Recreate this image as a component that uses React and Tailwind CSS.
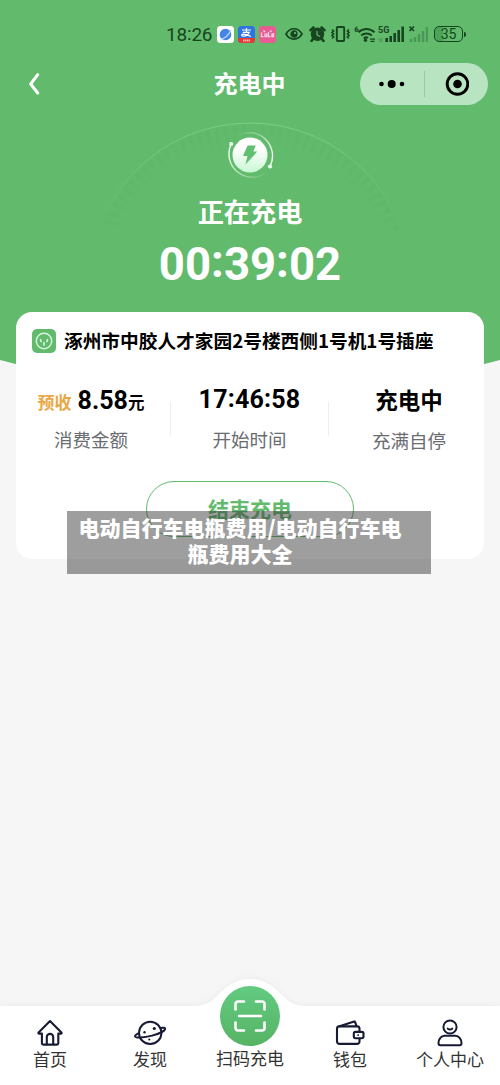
import clsx from 'clsx';

const tabs = [
  { id: 'home', label: '首页', icon: HomeIcon },
  { id: 'discover', label: '发现', icon: PlanetIcon },
  { id: 'scan', label: '扫码充电', icon: ScanIcon, primary: true },
  { id: 'wallet', label: '钱包', icon: WalletIcon },
  { id: 'profile', label: '个人中心', icon: UserIcon },
];

function HomeIcon() {
  return (
    <svg className="h-[28px] w-[28px]" viewBox="0 0 28 28" fill="none" stroke="#171a33" strokeWidth="2.1" strokeLinejoin="round" strokeLinecap="round">
      <path d="M14 2 2.6 13.4c-.5.6-.2 1.200.5 1.200h2.800v9.600c0 .9.6 1.400 1.400 1.400h13.600c.8 0 1.400-.5 1.400-1.400v-9.600h2.600c.7 0 1-.6.5-1.200L14 2Z" />
      <path d="M10.800 25.300v-7.200a3.200 3.200 0 0 1 6.400 0v7.200" />
    </svg>
  );
}

function PlanetIcon() {
  return (
    <svg className="h-[28px] w-[32px]" viewBox="0 0 32 28" fill="none" stroke="#171a33" strokeWidth="2" strokeLinecap="round" strokeLinejoin="round">
      <circle cx="16.200" cy="13.900" r="11.200" />
      <path d="M26.500 9c3-.7 4.600-.3 4.600.7 0 1.900-5.300 5-13 6.900C9.600 18.700 1.500 19.200 1.100 17.500c-.2-1.100 1.200-2.200 3.700-3.400" />
      <circle cx="20.300" cy="9.500" r="1.600" fill="#171a33" stroke="none" />
      <circle cx="10.500" cy="13.200" r="1.200" fill="#171a33" stroke="none" />
      <circle cx="15.300" cy="20.500" r="1.100" fill="#171a33" stroke="none" />
    </svg>
  );
}

function WalletIcon() {
  return (
    <svg className="h-[28px] w-[30px]" viewBox="0 0 30 28" fill="none" stroke="#171a33" strokeWidth="2.1" strokeLinejoin="round" strokeLinecap="round">
      <path d="M24.500 12.700V9.800a2.400 2.400 0 0 0-2.400-2.400H4.400A2.400 2.400 0 0 0 2 9.800v12.700a2.400 2.400 0 0 0 2.400 2.400h17.700a2.400 2.400 0 0 0 2.400-2.400v-3" />
      <path d="m4.500 7.200 14.700-4.600c.5-.1.900.1 1 .5l1.300 4" />
      <rect x="18.800" y="12.900" width="9.700" height="6.400" rx="1.700" />
      <path d="M23 16.100h.2" strokeWidth="1.700" />
    </svg>
  );
}

function UserIcon() {
  return (
    <svg className="h-[28px] w-[26px]" viewBox="0 0 26 28" fill="none" stroke="#171a33" strokeWidth="2" strokeLinecap="round" strokeLinejoin="round">
      <circle cx="13" cy="8" r="6.600" />
      <path d="M10.800 9.600c1.200 1.300 3.200 1.300 4.400 0" />
      <path d="M7.500 16.800h11c3.300 0 5.800 3.400 6 7.200 0 1.400-.6 2.200-1.800 2.200H3.300c-1.200 0-1.800-.8-1.800-2.200.2-3.800 2.700-7.200 6-7.200Z" />
    </svg>
  );
}

function ScanIcon() {
  return (
    <svg className="h-[32px] w-[32px]" viewBox="0 0 32 32" fill="none" stroke="#fff" strokeWidth="2.600" strokeLinecap="round" strokeLinejoin="round">
      <path d="M1.500 9.500V4a2.500 2.500 0 0 1 2.500-2.500h6M22 1.500h6A2.500 2.500 0 0 1 30.500 4v5.500M30.500 22.500V28a2.500 2.500 0 0 1-2.500 2.500h-6M10 30.500H4A2.500 2.500 0 0 1 1.500 28v-5.500M5 16h22" />
    </svg>
  );
}

// Digits with the colons lifted to the middle of the numerals
function Clock({ value, colonClass }) {
  return value.split(/(:)/).map((part, index) =>
    part === ':' ? (
      <span key={index} className={clsx('relative', colonClass)}>
        :
      </span>
    ) : (
      part
    )
  );
}

function StatusBar() {
  return (
    <div className="flex h-[55px] items-center pt-[13px] pl-[166px] text-[#17451f]">
      <span className="w-[51px] font-['Roboto'] text-[19px] leading-none tracking-[-0.2px]">
        <Clock value="18:26" colonClass="-top-px" />
      </span>
      <svg className="h-[17px] w-[17px]" viewBox="0 0 17 17">
        <rect width="17" height="17" rx="3.500" fill="#fff" />
        <circle cx="8.500" cy="8.500" r="5.800" fill="#4384e4" />
        <path d="M3.500 13.200C7 13 12 9 14 4" stroke="#b8d7fb" strokeWidth="1.300" fill="none" />
      </svg>
      <svg className="ml-[4px] h-[17px] w-[17px]" viewBox="0 0 17 17">
        <rect width="17" height="17" rx="3.500" fill="#2f72e4" />
        <path d="M0 12h17v1.500a3.500 3.500 0 0 1-3.500 3.500h-10A3.500 3.500 0 0 1 0 13.500Z" fill="#e23b36" />
        <path d="M4 4h9M8.500 2v4M4.800 6.300h6.500c-.8 2-3 4-6.200 3.900-2-.2-1.700-2 .2-2 2.200 0 5 1.200 7.700 2.300" stroke="#fff" strokeWidth="1.200" fill="none" />
        <path d="M5 14.500h7" stroke="#f7b5b0" strokeWidth="2" strokeDasharray="1.500 .5" />
      </svg>
      <svg className="ml-[4px] h-[17px] w-[17px]" viewBox="0 0 17 17">
        <rect width="17" height="17" rx="3.500" fill="#e85c94" />
        <path d="M2.500 6.500v4.200h2M6 7.500v3.200h1.800V7.200M9.500 6v4.700h2M13 7.500v3.200h1.500V7M4.500 4.500 6 6M12.500 4.500 11 6" stroke="#fbd7e5" strokeWidth="1.300" fill="none" />
      </svg>
      {/* eye comfort */}
      <svg className="ml-[9px] h-[14px] w-[18px]" viewBox="0 0 18 14" fill="none" stroke="currentColor" strokeWidth="1.700">
        <path d="M1 7c3.800-7 12.200-7 16 0-3.800 6.700-12.200 6.700-16 0Z" />
        <circle cx="9" cy="7" r="2.800" fill="currentColor" />
        <circle cx="10" cy="6" r=".9" fill="#8bc994" stroke="none" />
      </svg>
      {/* alarm */}
      <svg className="ml-[6px] h-[16px] w-[17px]" viewBox="0 0 17 16">
        <circle cx="8.500" cy="8.300" r="6.700" fill="currentColor" />
        <path d="M1.500 4.200 4.500 1.500M15.500 4.200l-3-2.700M4 13l-1.500 2M13 13l1.500 2" stroke="currentColor" strokeWidth="2.600" strokeLinecap="round" />
        <path d="M8 5v4l3 1.500" stroke="#62bb6d" strokeWidth="1.200" fill="none" />
      </svg>
      {/* vibrate */}
      <svg className="ml-[5px] h-[16px] w-[19px]" viewBox="0 0 19 16" fill="none" stroke="currentColor" strokeWidth="1.900">
        <rect x="5.800" y="1" width="7.400" height="14" rx="1" />
        <path d="m1 3.500 1.600 1.500L1 6.500 2.600 8 1 9.500 2.600 11 1 12.500M18 3.500 16.400 5 18 6.500 16.400 8 18 9.500 16.400 11 18 12.500" strokeWidth="1.600" />
      </svg>
      {/* wifi 6 */}
      <svg className="ml-[4px] h-[18px] w-[22px]" viewBox="0 0 22 18" fill="none" stroke="currentColor" strokeWidth="2">
        <path d="M3.400 1.800C1.500 2.500.7 4.300 1.200 5.500s2.500 1.200 2.900-.2S2.300 3.500 1.300 4.500" strokeWidth="1.100" />
        <path d="M4.500 7.200c4.500-4.300 11.500-4.300 16 0M7.200 10.500c3-2.800 7.600-2.800 10.600 0" />
        <path d="M9.800 13.400c1.400-1.200 3-1.200 4.200-.4" />
        <circle cx="11.500" cy="15.300" r="1.700" fill="currentColor" stroke="none" />
        <path d="M16 14.200h5M16.500 16.400h4" strokeWidth="1.300" />
      </svg>
      {/* 5G signal */}
      <div className="relative ml-[2px] h-[18px] w-[26px]">
        <span className="absolute -top-[1px] left-0 font-['Roboto'] text-[9px] leading-[12px] font-bold">5G</span>
        <svg className="h-[18px] w-[26px]" viewBox="0 0 26 18" stroke="currentColor" strokeWidth="2.600">
          <path d="M0 14h5M1 16.200h4" strokeWidth="1.200" opacity=".3" />
          <path d="M8.700 17v-4M12.700 17V11M16.700 17V8M20.700 17V5M24.700 17V1.500" />
        </svg>
      </div>
      <svg className="ml-[5px] h-[18px] w-[19px]" viewBox="0 0 19 18" stroke="currentColor" strokeWidth="2.500">
        <path d="m.5 1.500 4.500 4.500M5 1.500.5 6" strokeWidth="1.600" />
        <path d="M2 17v-3M6 17v-5M10 17V9M14 17V6M18 17V2" opacity=".3" />
      </svg>
      <div className="ml-[6px] flex items-center">
        <div className="flex h-[16px] w-[29px] items-center justify-center rounded-[5px] border-[1.5px] border-current bg-[linear-gradient(90deg,#4da357_30%,transparent_30%)] font-['Roboto'] text-[14px] leading-none">
          35
        </div>
        <span className="ml-px h-[5px] w-[2px] rounded-r bg-current" />
      </div>
    </div>
  );
}

function TopBar() {
  return (
    <div className="flex h-[57px] items-center justify-between pr-3 pl-[28px]">
      <svg className="h-[22px] w-[115px]" viewBox="0 0 115 22" fill="none" stroke="#fff" strokeWidth="3" strokeLinecap="round" strokeLinejoin="round">
        <path d="M9.700 1.700 2.700 11l7 9" />
      </svg>
      <h1 className="mt-[-1px] mr-[1px] ml-[-3px] text-[24px] leading-none font-bold text-white">充电中</h1>
      <div className="flex h-[42px] w-[128px] items-center rounded-full bg-[#b9e4c2]">
        <svg className="h-[10px] w-[63px]" viewBox="0 0 63 10">
          <circle cx="21.500" cy="5" r="2.300" />
          <circle cx="31.700" cy="5" r="4" />
          <circle cx="42" cy="5" r="2.300" />
        </svg>
        <span className="ml-px h-[26px] w-px bg-[#9acba4]" />
        <svg className="ml-[20px] h-[24px] w-[24px]" viewBox="0 0 24 24">
          <circle cx="12.500" cy="12" r="10.300" fill="none" stroke="#000" strokeWidth="2.900" />
          <circle cx="12.500" cy="12" r="4.300" />
        </svg>
      </div>
    </div>
  );
}

function HeroBackdrop() {
  return (
    <svg className="absolute top-0 left-0 h-[400px] w-[500px]" viewBox="0 0 500 400" fill="none">
      <defs>
        <linearGradient id="arc" x1="0" y1="122" x2="0" y2="215" gradientUnits="userSpaceOnUse">
          <stop stopColor="#9be0a5" stopOpacity=".45" />
          <stop offset="1" stopColor="#9be0a5" stopOpacity="0" />
        </linearGradient>
        <radialGradient id="ticks" cx="250" cy="284" r="160" gradientUnits="userSpaceOnUse">
          <stop offset=".82" stopColor="#4ba457" stopOpacity="0" />
          <stop offset="1" stopColor="#4ba457" stopOpacity=".12" />
        </radialGradient>
        <clipPath id="upper">
          <rect width="500" height="229" />
        </clipPath>
      </defs>
      <path d="M0 0h500v360Q250 428 0 360Z" fill="#62bb6d" />
      <g clipPath="url(#upper)">
        <circle cx="250" cy="284" r="161" stroke="url(#arc)" strokeWidth="1" />
        <circle cx="250" cy="284" r="145" stroke="url(#ticks)" strokeWidth="28" strokeDasharray="4 4.550" />
      </g>
    </svg>
  );
}

function ChargingBadge() {
  return (
    <svg className="h-[50px] w-[50px]" viewBox="0 0 50 50" fill="none">
      <defs>
        <linearGradient id="disc" x1="0" y1="0" x2="0" y2="1">
          <stop offset=".3" stopColor="#fff" />
          <stop offset="1" stopColor="#c9f7d3" />
        </linearGradient>
        <linearGradient id="fadeLeft" x1="2" y1="20" x2="42" y2="46" gradientUnits="userSpaceOnUse">
          <stop stopColor="#fff" />
          <stop offset="1" stopColor="#fff" stopOpacity="0" />
        </linearGradient>
        <linearGradient id="fadeRight" x1="48" y1="30" x2="12" y2="5" gradientUnits="userSpaceOnUse">
          <stop stopColor="#fff" />
          <stop offset="1" stopColor="#fff" stopOpacity="0" />
        </linearGradient>
      </defs>
      <circle cx="25" cy="25" r="17.500" fill="url(#disc)" />
      <path d="M22.600 15.500h8.200l-2.500 6h4L20.500 34.400l2-8.400H18Z" fill="#5fc070" />
      <path d="M6.200 14A23.300 23.300 0 0 0 42 42" stroke="url(#fadeLeft)" strokeWidth="1.400" />
      <path d="M45 36.500A23.300 23.300 0 0 0 13 5.500" stroke="url(#fadeRight)" strokeWidth="1.400" />
      <circle cx="6.200" cy="14" r="2.100" fill="#e9fbec" />
      <circle cx="45" cy="36.500" r="2.100" fill="#e9fbec" />
    </svg>
  );
}

function OrderCard() {
  return (
    <section className="mx-4 mt-[22px] h-[247px] rounded-2xl bg-white">
      <div className="flex h-[57px] items-center pl-4">
        <svg className="h-[24px] w-[24px]" viewBox="0 0 24 24" fill="none" stroke="#d8f5dc" strokeWidth="1.400" strokeLinecap="round">
          <rect width="24" height="24" rx="5" fill="#62bb6d" stroke="none" />
          <circle cx="12" cy="12" r="7.700" />
          <path d="M12 13.500v2.500M8.500 10.700l.6 1.800M15.500 10.700l-.6 1.800" strokeWidth="1.700" />
        </svg>
        <h2 className="-mt-px ml-2 text-[18.7px] leading-none font-bold whitespace-nowrap text-black">涿州市中胶人才家园2号楼西侧1号机1号插座</h2>
      </div>
      <div className="mt-[15px] grid grid-cols-[154px_1fr_155px]">
        <div className="flex flex-col items-center pr-[4px]">
          <p className="flex h-[34px] items-baseline leading-[33px] whitespace-nowrap text-black">
            <span className="mr-[6px] text-[17px] font-bold text-[#e9a844]">预收</span>
            <span className="font-['Roboto'] text-[25px] font-bold">8.58</span>
            <span className="text-[16.5px] font-bold">元</span>
          </p>
          <p className="mt-[11px] text-[18.500px] leading-[20px] text-[#6a6c70]">消费金额</p>
        </div>
        <div className="relative flex flex-col items-center">
          <span className="absolute top-[18px] left-0 h-[34px] w-px bg-[#eeeeee]" />
          <span className="absolute top-[18px] right-0 h-[34px] w-px bg-[#eeeeee]" />
          <p className="h-[34px] font-['Roboto'] text-[25px] leading-[32px] font-bold tracking-[0.2px] text-black">
            <Clock value="17:46:58" colonClass="-top-px" />
          </p>
          <p className="mt-[11px] text-[18.500px] leading-[20px] text-[#6a6c70]">开始时间</p>
        </div>
        <div className="flex flex-col items-center pl-[5px]">
          <p className="h-[34px] text-[22.500px] leading-[31px] font-bold text-black">充电中</p>
          <p className="mt-[12px] text-[18.500px] leading-[20px] text-[#6a6c70]">充满自停</p>
        </div>
      </div>
      <button
        type="button"
        className="mx-auto mt-[31px] flex h-[56px] w-[208px] items-center justify-center rounded-full border-[1.5px] border-[#62bb6d] text-[21px] font-bold text-[#62bb6d]"
      >
        结束充电
      </button>
    </section>
  );
}

function TabBar() {
  return (
    <nav className="relative mt-auto h-[79px]">
      <svg className="absolute bottom-0 left-0 h-[109px] w-[500px] drop-shadow-[0_-1px_3px_rgba(0,0,0,0.04)]" viewBox="0 0 500 109">
        <path d="M0 30h194c12 0 17-4 25-12 9-9 19-15 31-15S272 9 281 18c8 8 13 12 25 12h194v79H0Z" fill="#fff" />
      </svg>
      <div className="relative grid h-full grid-cols-5">
        {tabs.map(({ id, label, icon: Icon, primary }) => (
          <button key={id} type="button" className="flex flex-col items-center">
            <span
              className={clsx(
                'flex items-center justify-center',
                primary
                  ? '-mt-[20px] h-[60px] w-[60px] rounded-full bg-linear-to-b from-[#62cb82] to-[#57b364]'
                  : 'mt-[13px] h-[28px]'
              )}
            >
              <Icon />
            </span>
            <span className="text-[17px] leading-[24px] whitespace-nowrap text-[#333]">{label}</span>
          </button>
        ))}
      </div>
    </nav>
  );
}

export default function App() {
  return (
    <div className="relative flex h-[1085px] w-[500px] flex-col overflow-hidden bg-[#f6f6f6] font-['Noto_Sans_CJK_SC',sans-serif]">
      <HeroBackdrop />
      <div className="relative">
        <StatusBar />
        <TopBar />
        <header className="flex h-[178px] flex-col items-center pt-[18px] text-white">
          <ChargingBadge />
          <p className="mt-[16px] text-[26.200px] leading-[30px] font-bold">正在充电</p>
          <p className="mt-[14px] font-['Roboto'] text-[45.500px] leading-[50px] font-bold">
            <Clock value="00:39:02" colonClass="-top-[3px]" />
          </p>
        </header>
        <OrderCard />
      </div>
      <div className="absolute top-[511px] left-[67px] h-[63px] w-[364px] bg-[rgba(53,53,53,0.48)] pt-[3px] pr-[18px] text-center text-[21px] leading-[26px] font-black text-white">
        电动自行车电瓶费用/电动自行车电
        <br />
        瓶费用大全
      </div>
      <TabBar />
    </div>
  );
}
